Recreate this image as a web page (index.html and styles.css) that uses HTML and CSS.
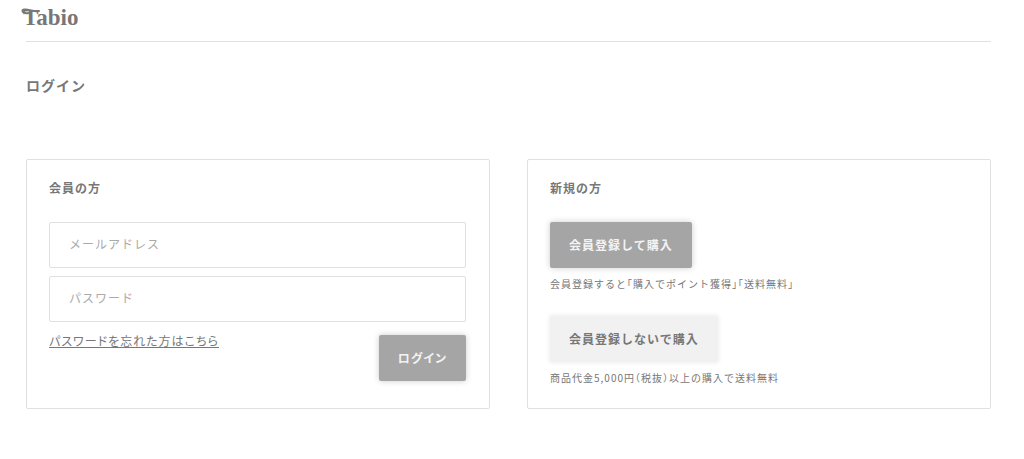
FILE: index.html
```html
<!DOCTYPE html>
<html lang="ja">
<head>
  <meta charset="UTF-8">
  <meta name="viewport" content="width=device-width, initial-scale=1.0">
  <title>ログイン | Tabio</title>
  <link rel="stylesheet" href="styles.css">
</head>
<body>
  <div class="container">
    <header class="header">
      <a href="#" class="logo" aria-label="Tabio">
        <svg width="70" height="32" viewBox="0 0 70 32">
          <text x="2" y="21" class="logo-text">Tabio</text>
          <path d="M10 8.500 C6 10 1.500 9 1.500 6.800 C1.500 4.500 6 5.500 10 6.500 C13 7.200 16 7.500 18 7" fill="none" stroke="#777" stroke-width="2" stroke-linecap="round"/>
        </svg>
      </a>
    </header>

    <main>
      <h1>ログイン</h1>
      <div class="grid">
        <section class="box">
          <h2>会員の方</h2>
          <form class="login-form">
            <input type="email" placeholder="メールアドレス" aria-label="メールアドレス">
            <input type="password" placeholder="パスワード" aria-label="パスワード">
            <div class="form-footer">
              <a href="#" class="forgot">パスワードを忘れた方はこちら</a>
              <button type="submit" class="btn">ログイン</button>
            </div>
          </form>
        </section>

        <section class="box">
          <h2>新規の方</h2>
          <button type="button" class="btn">会員登録して購入</button>
          <p class="note">会員登録すると「購入でポイント獲得」「送料無料」</p>
          <button type="button" class="btn btn-light">会員登録しないで購入</button>
          <p class="note">商品代金5,000円（税抜）以上の購入で送料無料</p>
        </section>
      </div>
    </main>
  </div>
</body>
</html>
```
FILE: styles.css
```css
* { box-sizing: border-box; }
body { margin: 0; background: #fff; color: #777; font-family: "Noto Sans CJK JP", sans-serif; font-size: 12px; line-height: 20px; letter-spacing: 1px; }
.container { padding: 0 33px 0 26px; }
.header { height: 42px; padding-top: 4px; border-bottom: 1px solid #e0e0e0; }
.logo { display: block; width: 70px; margin-left: -5px; }
.logo svg { display: block; }
.logo-text { font-family: "Liberation Serif", serif; font-size: 23px; font-weight: bold; letter-spacing: 0; fill: #777; }
h1 { margin: 33px 0 64px; font-size: 14px; line-height: 20px; }
h2 { margin: 0 0 24px; font-size: 12px; line-height: 20px; }
.grid { display: grid; grid-template-columns: 1fr 1fr; gap: 37px; }
.box { padding: 18px 23px 20px 22px; border: 1px solid #e0e0e0; border-radius: 2px; }
.login-form { display: grid; gap: 8px; }
input { width: 100%; height: 46px; padding: 0 19px 4px; border: 1px solid #e0e0e0; border-radius: 2px; color: #777; font: inherit; letter-spacing: inherit; }
input::placeholder { color: #aaa; }
.form-footer { display: flex; justify-content: space-between; align-items: flex-start; padding-top: 5px; }
.forgot { color: #777; line-height: 12px; font-feature-settings: "palt"; text-underline-offset: 1px; }
.btn { display: block; height: 46px; padding: 0 19px; border: 0; border-radius: 2px; background: #a5a5a5; color: #f3f3f3; font: inherit; font-weight: bold; letter-spacing: inherit; box-shadow: 0 0 6px rgba(0,0,0,0.2); }
.form-footer .btn { font-feature-settings: "palt"; }
.btn-light { margin-top: 22px; background: #f1f1f1; color: #777; box-shadow: 0 0 4px 1px #eee; }
.note { margin: 6px 0 0; font-size: 10px; line-height: 20px; font-feature-settings: "halt"; }
```
